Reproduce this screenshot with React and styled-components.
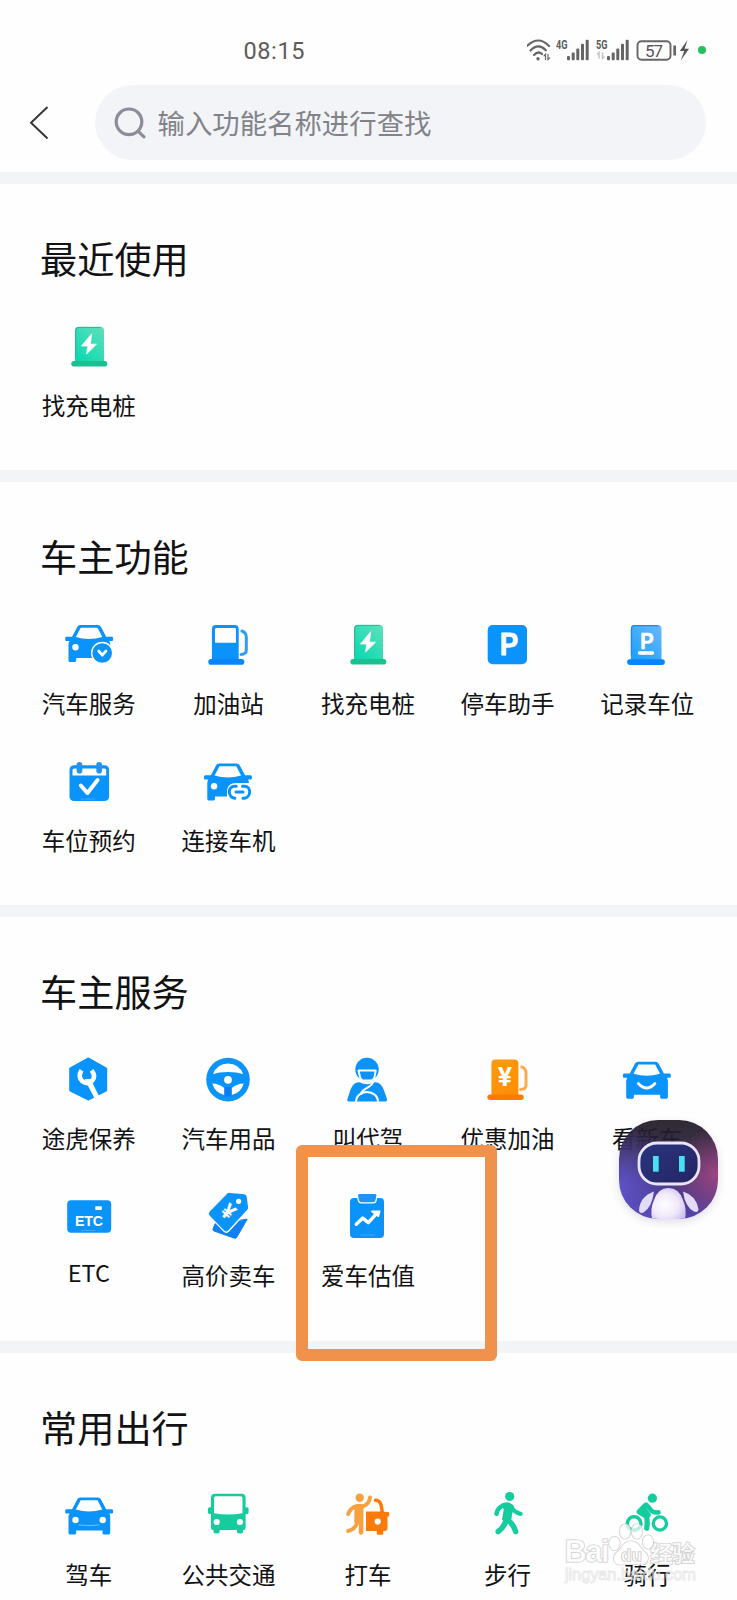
import styled, { createGlobalStyle } from 'styled-components';

const GlobalStyle = createGlobalStyle`
    * {
        box-sizing: border-box;
    }

    html, body {
        margin: 0;
        padding: 0;
        background-color: #fefefe;
        overflow: hidden;
    }

    body {
        font-family: "Noto Sans CJK SC", "Noto Sans", sans-serif;
        color: #121214;
    }

    svg {
        display: block;
        flex: none;
    }
`;

const Page = styled.div`
    position: relative;
    width: 737px;
    height: 1600px;
    overflow: hidden;
    background-color: #fefefe;
`;

export default function App() {
    return (
        <Page>
            <GlobalStyle />
            <StatusBar />
            <Header />
            {sections.map((section) => (
                <Section key={section.title} {...section} />
            ))}
            <Highlight />
            <Assistant />
            <Watermark />
        </Page>
    );
}

// Status bar

const StyledStatusBar = styled.div`
    display: flex;
    align-items: center;
    height: 85px;
    padding: 15px 31px 0 243.5px;

    .time {
        padding-top: 2px;
        font-family: Roboto, sans-serif;
        font-size: 23.5px;
        letter-spacing: 0.6px;
        color: #5c5c5c;
    }

    .indicators {
        display: flex;
        align-items: center;
        margin-left: auto;
    }
`;

const Dot = styled.span`
    width: 8px;
    height: 8px;
    margin-left: 9px;
    border-radius: 50%;
    background-color: #26bf5c;
`;

function Signal({ name, traffic }) {
    return (
        <svg width="40" height="24" viewBox="0 0 40 24">
            <text x="1" y="10.5" fontFamily="Roboto, sans-serif" fontWeight="700" fontSize="12" textLength="11.5" lengthAdjust="spacingAndGlyphs" fill="#5c5c5c">{name}</text>
            {traffic && <path d="M4 20.500v-6l-2 2M7.500 14.500v6l2-2" stroke="#c4c4c4" strokeWidth="1.500" fill="none" />}
            <g fill="#666">
                <rect x="12" y="18" width="3" height="4.200" rx="1" />
                <rect x="16.700" y="14.500" width="3" height="7.700" rx="1" />
                <rect x="21.300" y="10.500" width="3" height="11.700" rx="1" />
                <rect x="26" y="5.800" width="3" height="16.400" rx="1" />
                <rect x="30.700" y="1.800" width="3" height="20.400" rx="1" />
            </g>
        </svg>
    );
}

function StatusBar() {
    return (
        <StyledStatusBar>
            <span className="time">08:15</span>
            <div className="indicators">
                <svg width="28" height="24" viewBox="0 0 28 24" fill="none" stroke="#666" strokeWidth="2.200" strokeLinecap="round">
                    <path d="M0 8Q11.500 -3 22 8M3.500 12.500Q11.500 4.500 18.800 12.300M7 17Q11.300 12.500 15 16" />
                    <circle cx="11" cy="20.700" r="1.700" fill="#666" stroke="none" />
                    <path d="M18.500 21.500v-5.200l-1.500 1.500M21 16.300v5.200l1.700-1.700" strokeWidth="1.200" />
                </svg>
                <Signal name="4G" />
                <Signal name="5G" traffic />
                <svg width="54" height="24" viewBox="0 0 54 24">
                    <rect x="2.500" y="3.200" width="33" height="18.500" rx="4" fill="none" stroke="#666" strokeWidth="1.900" />
                    <text x="19" y="18.500" textAnchor="middle" fontFamily="Roboto, sans-serif" fontSize="17" textLength="18" fill="#555">57</text>
                    <rect x="38.300" y="7.500" width="2.700" height="10" fill="#666" />
                    <path d="M52.500 2L44.800 13h4.500L45.600 22.800 54 10.800h-4.400z" fill="#555" />
                </svg>
                <Dot />
            </div>
        </StyledStatusBar>
    );
}

// Header

const StyledHeader = styled.header`
    display: flex;
    align-items: center;
    justify-content: space-between;
    height: 87px;
    padding: 0 31.5px 12px 29px;
`;

const SearchBox = styled.div`
    display: flex;
    align-items: center;
    gap: 10.5px;
    width: 610.5px;
    height: 74.5px;
    padding-left: 19px;
    border-radius: 38px;
    background-color: #f3f4f8;
    font-size: 27.4px;
    line-height: 40px;
    color: #818389;

    span {
        padding-bottom: 1.5px;
    }
`;

function Header() {
    return (
        <StyledHeader>
            <svg width="22" height="38" viewBox="0 0 22 38" fill="none" stroke="#333" strokeWidth="1.9">
                <path d="M18.500 3L2 18.700 18.500 34.500" />
            </svg>
            <SearchBox>
                <svg width="33" height="34" viewBox="0 0 33 34" fill="none" stroke="#8b8d99" strokeWidth="3.200" strokeLinecap="round">
                    <circle cx="15" cy="15.800" r="12.800" />
                    <path d="M24.500 25.600L30 30.800" />
                </svg>
                <span>输入功能名称进行查找</span>
            </SearchBox>
        </StyledHeader>
    );
}

// Sections

const StyledSection = styled.section`
    height: ${(props) => props.$height}px;
    padding: 54px 20px 0 19px;
    border-top: 12px solid #f3f4f6;
    box-sizing: content-box;
    width: 698px;

    h2 {
        margin: 0 0 42px 21px;
        font-size: 37.2px;
        font-weight: 400;
        line-height: 41px;
    }
`;

const Grid = styled.div`
    display: grid;
    grid-template-columns: repeat(5, 1fr);
    row-gap: 36.4px;
`;

const Item = styled.div`
    display: flex;
    flex-direction: column;
    align-items: center;
    gap: ${(props) => (props.$latin ? 12.5 : 16)}px;
    height: 101px;
    font-size: 23.5px;
    line-height: 32px;
    white-space: nowrap;
`;

function Section({ title, height, items }) {
    return (
        <StyledSection $height={height}>
            <h2>{title}</h2>
            <Grid>
                {items.map(([name, Icon]) => (
                    <Item key={name} $latin={name === 'ETC'}>
                        <svg width="52" height="52" viewBox="0 0 52 52" fill="none" strokeLinecap="round" strokeLinejoin="round" overflow="visible">
                            <Icon />
                        </svg>
                        <span>{name}</span>
                    </Item>
                ))}
            </Grid>
        </StyledSection>
    );
}

// Icons, all on a 52px canvas

const BLUE = '#0a93fb';
const GREEN = '#14cc9e';

function CarBody() {
    return (
        <path
            fill={BLUE}
            fillRule="evenodd"
            d="M17.500 6h17.200c1.500 0 2.600.7 3.300 2l5.200 9.700h5.400c1 0 1.500.7 1.500 1.700v1c0 1-.6 1.600-1.600 1.600h-2.300q1 1.500 1 3.500v15.500c0 1.500-.6 2-2 2h-3.700c-1.500 0-2-.6-2-2V39H13.200v2c0 1.400-.6 2-2 2H7.500c-1.400 0-2-.6-2-2V25.500q0-2 1-3.500H3.800c-1 0-1.600-.6-1.600-1.600v-1c0-1 .6-1.700 1.600-1.700h5.300L14.200 8c.7-1.300 1.800-2 3.300-2zM17.700 8.700L12.800 18Q26 22 39.300 18L34.500 8.700z"
        />
    );
}

function CarService() {
    return (
        <>
            <CarBody />
            <circle cx="12.500" cy="28.300" r="3.200" fill="#fff" />
            <path d="M32 44.500h18V30H37z" fill="#fefefe" />
            <circle cx="39.200" cy="34" r="11.200" fill="#fefefe" />
            <circle cx="39.200" cy="34" r="9.800" fill={BLUE} />
            <path d="M35.700 32l3.600 4.200 3.700-4.200" stroke="#fff" strokeWidth="2.700" />
        </>
    );
}

function CarLink() {
    return (
        <>
            <g transform="translate(-.2 1.600)">
                <CarBody />
            </g>
            <circle cx="12.100" cy="30.300" r="3.200" fill="#fff" />
            <path d="M25 46V36c0-6 3.500-9 9-9h15.500V46z" fill="#fefefe" />
            <g stroke={BLUE} strokeWidth="3">
                <path d="M34.200 30.200h-1.400c-3.500 0-5.500 2.600-5.500 5.600s2 5.900 5.500 6.500M40.500 30.200h2c3.300 0 5.200 2.600 5.200 5.600s-2 5.900-5.200 6.500h-1.500M34 36.100h7" />
            </g>
        </>
    );
}

function CarSmile() {
    return (
        <>
            <g transform="translate(-.3 1.800)">
                <CarBody />
            </g>
            <path d="M17.300 29.500q8.400 9 16.600 0" stroke="#fff" strokeWidth="2.800" />
        </>
    );
}

function CarDrive() {
    return (
        <>
            <g transform="translate(0 1.600)">
                <CarBody />
            </g>
            <circle cx="12.500" cy="30" r="3.200" fill="#fff" />
            <circle cx="39.700" cy="30" r="3.200" fill="#fff" />
            <path d="M16 35q10 1.200 20 0" stroke="#7cc8ff" strokeWidth=".9" />
        </>
    );
}

function FuelPump() {
    return (
        <>
            <path d="M14 6h18.500c3 0 4.200 1.500 4.200 4v32H9.900V10c0-2.500 1.300-4 4.100-4z" fill={BLUE} />
            <path d="M14.500 9H32.500c1 0 1.500.5 1.500 1.500v13.200H13V10.500c0-1 .5-1.500 1.500-1.500z" fill="#fefefe" />
            <path d="M40 12q4.300 1.700 4.300 6v13q0 4.300-5.300 4.500" stroke="#2b9ff5" strokeWidth="3" />
            <rect x="6.300" y="40" width="36" height="5.700" rx="2.800" fill="#0b84fb" />
        </>
    );
}

function ChargePile() {
    return (
        <>
            <linearGradient id="pile" x1="1" y1="0" x2="0.300" y2="1">
                <stop offset="0" stopColor="#5fe0bb" />
                <stop offset="1" stopColor="#0cd9b0" />
            </linearGradient>
            <rect x="12" y="5.800" width="29" height="38" rx="4" fill="url(#pile)" />
            <path d="M12.700 36V10q0-3.500 3.300-3.500h21" stroke="#31b795" strokeWidth="1.200" />
            <rect x="8.300" y="40" width="36" height="5.600" rx="2.800" fill="#1cbf8f" />
            <path d="M28.500 13L18.500 25h6.300l-1.200 8L33.500 23.200h-5.800z" fill="#fff" stroke="#fff" strokeWidth=".8" />
        </>
    );
}

function Parking() {
    return (
        <>
            <rect x="5.700" y="6" width="39.300" height="39.300" rx="5" fill={BLUE} />
            <text x="27" y="36" textAnchor="middle" fontFamily="Inter, sans-serif" fontWeight="600" fontSize="29.500" fill="#fff" stroke="#fff" strokeWidth=".8">P</text>
        </>
    );
}

function ParkingRecord() {
    return (
        <>
            <linearGradient id="record" x1="1" y1="0" x2="0.300" y2="1">
                <stop offset="0" stopColor="#6cb9fa" />
                <stop offset="1" stopColor="#1ea0fc" />
            </linearGradient>
            <rect x="9.800" y="6" width="30.700" height="38" rx="4" fill="url(#record)" />
            <path d="M10.500 36V10q0-3.400 3.300-3.400H37" stroke="#2685df" strokeWidth="1.200" />
            <rect x="6.100" y="40.200" width="37.800" height="5.700" rx="2.800" fill="#0b84fb" />
            <text x="26" y="29.500" textAnchor="middle" fontFamily="Inter, sans-serif" fontWeight="600" fontSize="21.500" fill="#fff" stroke="#fff" strokeWidth=".6">P</text>
            <path d="M18.500 34h13" stroke="#fff" strokeWidth="3.400" />
        </>
    );
}

function Calendar() {
    return (
        <>
            <rect x="6.500" y="9.300" width="39.600" height="35.800" rx="4.500" fill={BLUE} />
            <path d="M9.500 14.200q0-1.700 1.700-1.700h30.300q1.700 0 1.700 1.700v5.200H9.500z" fill="#fefefe" />
            <rect x="13.600" y="6" width="5.700" height="11.500" rx="2.800" fill="#2692ee" />
            <rect x="33.300" y="6" width="5.700" height="11.500" rx="2.800" fill="#2692ee" />
            <path d="M17.800 29.500l6.600 7.500 10.200-13" stroke="#fff" strokeWidth="3.900" />
            <path d="M18 43h14" stroke="#6ac0ff" strokeWidth=".5" />
        </>
    );
}

function Maintenance() {
    return (
        <>
            <path d="M25.300 5L42.700 14.800v21.400L25.300 45 7.700 36.200V14.800z" fill={BLUE} stroke={BLUE} strokeWidth="3" />
            <path d="M18.500 16.300q-4 6.500.7 10.800 5.200 4 10-.3 4-4.500-.6-10.500" stroke="#fff" strokeWidth="4.600" strokeLinecap="butt" />
            <path d="M16 14.500h4.700v7l3 2.500 3-2.500.5-7H32V28q-8 6-14 1z" fill="none" />
            <path d="M22 25h5.500l8.500 17-4.300 2.400L24.500 31z" fill="#fff" />
        </>
    );
}

function SteeringWheel() {
    return (
        <>
            <circle cx="26" cy="25.600" r="21.800" fill={BLUE} />
            <path d="M11 20.200Q15 9.500 26 9.500T41.200 20.200q-6-2.300-15.200-2.300T11 20.200z" fill="#fefefe" />
            <path d="M10.300 29.600q6.500.2 11.900 4.400V41Q13 39 10.300 29.600zM41.700 29.600q-6.500.2-11.900 4.400V41Q39 39 41.700 29.600z" fill="#fefefe" />
            <path d="M22.700 33h6.600v9.500h-6.600z" fill="#0b7df0" />
            <circle cx="26" cy="25.800" r="3.900" fill="#fff" />
        </>
    );
}

function Driver() {
    return (
        <>
            <path d="M17.500 28.200q7.700 4 15 0c6.500 0 8.500 5 9.800 9l2.700 8q.4 2.300-2 2.300H7.300q-2.400 0-2-2.300l2.700-8c1.300-4 3.500-9 9.500-9z" fill={BLUE} />
            <circle cx="25" cy="15.500" r="11.700" fill={BLUE} />
            <path d="M16.500 16.600h17.200l-1.200 6.400q-1 3.600-4.500 3.600h-5.500q-3.500 0-4.500-3.600z" fill={BLUE} stroke="#fff" strokeWidth="2" />
            <path d="M31.500 26.500C31 34 20.500 33.500 18.800 40" stroke="#fff" strokeWidth="2" />
            <path d="M14 47.500a11 9.500 0 0 1 22 0" stroke="#fff" strokeWidth="2" strokeLinecap="butt" />
        </>
    );
}

function DiscountFuel() {
    return (
        <>
            <linearGradient id="discount" x1="0" y1="0" x2="0.500" y2="1">
                <stop offset="0" stopColor="#fb9a12" />
                <stop offset="1" stopColor="#ff8f04" />
            </linearGradient>
            <rect x="9.400" y="5.500" width="27" height="38" rx="4" fill="url(#discount)" />
            <path d="M39.800 12.800q4.200 2 4.200 6v12q0 4.700-5.500 4.700" stroke="#fbac4e" strokeWidth="3" />
            <rect x="5.400" y="40.400" width="36.300" height="5.500" rx="2.700" fill="#fa7b04" />
            <text x="22.800" y="32.300" textAnchor="middle" fontFamily="Inter, sans-serif" fontWeight="700" fontSize="26" fill="#fff">¥</text>
        </>
    );
}

function NewCard() {
    return (
        <>
            <rect x="4.200" y="9.300" width="44" height="32.500" rx="4" fill={BLUE} />
            <rect x="32.200" y="15.300" width="6.700" height="3.700" rx=".8" fill="#fff" />
            <text x="12" y="35" fontFamily="Liberation Sans, sans-serif" fontWeight="700" fontSize="14.200" textLength="28" fill="#fff">ETC</text>
            <path d="M18 39.500h14" stroke="#6ac0ff" strokeWidth=".5" />
        </>
    );
}

function PriceTag() {
    return (
        <>
            <path d="M13 33l-2 5q-.5 1.500 1 2l20.500 7.200q1.700.5 2.300-1L45 28.500z" fill="#1080f0" stroke="#1080f0" strokeWidth="1" />
            <path d="M28 2.800l14 1.400q1.600.2 1.800 1.700l1.400 10.500q.1 1-.6 1.800L25.500 39q-1.200 1.300-2.400 0L8.400 24q-1.200-1.200-.2-2.500L25.300 3.800q1-1.200 2.700-1z" fill={BLUE} stroke="#fefefe" strokeWidth="4.600" paintOrder="stroke" />
            <path d="M28 2.800l14 1.400q1.600.2 1.800 1.700l1.400 10.500q.1 1-.6 1.800L25.500 39q-1.200 1.300-2.400 0L8.400 24q-1.200-1.200-.2-2.500L25.300 3.800q1-1.200 2.700-1z" fill={BLUE} stroke={BLUE} strokeWidth="1.800" />
            <circle cx="36.600" cy="10.300" r="2.600" fill="#fff" />
            <text transform="translate(26.200 20.600) rotate(42)" y="7.600" textAnchor="middle" fontFamily="Inter, sans-serif" fontWeight="700" fontSize="21" fill="#fff">¥</text>
        </>
    );
}

function Valuation() {
    return (
        <>
            <rect x="8" y="7" width="34" height="40" rx="4" fill={BLUE} />
            <path d="M17.600 3h15.300q1.800 0 1.500 1.800l-.9 4.400q-.4 2-2.400 2H19.400q-2 0-2.400-2l-.9-4.400Q15.800 3 17.600 3z" fill="#2492f0" stroke="#fff" strokeWidth="2.600" paintOrder="stroke" />
            <path d="M14.300 33.300l6.500-6.200 5.500 4.500 8.500-9.300" stroke="#fff" strokeWidth="3.400" />
            <path d="M29.800 20.300h8l-1.400 5z" fill="#fff" stroke="#fff" strokeWidth="1.500" />
            <path d="M19 44h13" stroke="#6ac0ff" strokeWidth=".5" />
        </>
    );
}

function Bus() {
    return (
        <>
            <path
                fill={GREEN}
                fillRule="evenodd"
                d="M13 3.700h26.500c2.800 0 4.100 1.400 4.100 4v9.600H45q1.600 0 1.600 1.600v3.500Q46.600 24 45 24h-1.400v14q0 2-2 2h-.5v1.500q0 2-2 2H37q-2 0-2-2V40H17.700v1.500q0 2-2 2h-2.200q-2 0-2-2V40H11q-2 0-2-2V24H7.600Q6 24 6 22.400v-3.500q0-1.600 1.600-1.600H9V7.700c0-2.600 1.300-4 4-4zM14 6.300q-2 0-2 2v15q14.300 2.600 28.500 0v-15q0-2-2-2z"
            />
            <circle cx="14.700" cy="32" r="3.100" fill="#fff" />
            <circle cx="37.900" cy="32" r="3.100" fill="#fff" />
        </>
    );
}

function Taxi() {
    return (
        <>
            <g fill="#f7a040">
                <circle cx="17.700" cy="7.800" r="4.200" />
                <path d="M12.500 15q4-1.500 8.900-.5V42q0 2.800-2.300 2.800T16.800 42V32l-4.500 1z" />
            </g>
            <path d="M28 7.500q-.8 6.500-6.600 8.700h-6.400q-6.500 1-8.800 8M15.500 31q-1.500 8-9.300 10" stroke="#f7a040" strokeWidth="3.900" />
            <path d="M24 21.500h14.500L46 22q1.300 0 1.300 1.500v1.800q0 1.500-1.800 1.500V38q0 3-2.700 3h-1.500v2.300q0 1.500-1.500 1.500h-3.500q-1.500 0-1.500-1.500V41H24z" fill="#fa7a0a" />
            <path d="M33.500 10.200c4.500 0 6 3.500 6.700 12" stroke="#fa7a0a" strokeWidth="3.500" />
            <circle cx="35.700" cy="31.600" r="3.100" fill="#fff" />
        </>
    );
}

function Walking() {
    return (
        <>
            <circle cx="27.700" cy="6.500" r="4.600" fill={GREEN} />
            <path d="M19.500 14q6-3.500 9.700 0c1.700 1.600 1.700 5 1.300 8.500l-1.500 8.600-9-1.300 1.700-10z" fill={GREEN} />
            <g stroke={GREEN} strokeWidth="4.500">
                <path d="M22 15q-6.500 2.300-7.500 8.800M29.500 16.500q1.500 5.300 8.900 7.300" />
                <path d="M24 28q.5 7-7.800 13.500M25.500 29.500q6.500 5.500 8.200 12.200" strokeWidth="5.400" />
            </g>
        </>
    );
}

function Cycling() {
    return (
        <>
            <circle cx="31.400" cy="8.200" r="4.600" fill={GREEN} />
            <g stroke={GREEN} strokeWidth="3.400">
                <circle cx="13.100" cy="33.500" r="6.800" />
                <circle cx="38.900" cy="33.500" r="6.600" />
                <path d="M24.500 15.300l-6.300 6.500 7.300 4.500q1.300 5.500.2 12" strokeWidth="5.200" />
                <path d="M25.500 15l5.500 6.200q2.500 1.500 6.500 1.200" strokeWidth="4.600" />
                <path d="M22.500 19l4.500 6" strokeWidth="5.500" />
            </g>
        </>
    );
}

const sections = [
    {
        title: '最近使用',
        height: 232,
        items: [['找充电桩', ChargePile]],
    },
    {
        title: '车主功能',
        height: 369,
        items: [
            ['汽车服务', CarService],
            ['加油站', FuelPump],
            ['找充电桩', ChargePile],
            ['停车助手', Parking],
            ['记录车位', ParkingRecord],
            ['车位预约', Calendar],
            ['连接车机', CarLink],
        ],
    },
    {
        title: '车主服务',
        height: 370,
        items: [
            ['途虎保养', Maintenance],
            ['汽车用品', SteeringWheel],
            ['叫代驾', Driver],
            ['优惠加油', DiscountFuel],
            ['看新车', CarSmile],
            ['ETC', NewCard],
            ['高价卖车', PriceTag],
            ['爱车估值', Valuation],
        ],
    },
    {
        title: '常用出行',
        height: 232,
        items: [
            ['驾车', CarDrive],
            ['公共交通', Bus],
            ['打车', Taxi],
            ['步行', Walking],
            ['骑行', Cycling],
        ],
    },
];

// Layers over the page

const Highlight = styled.div`
    position: absolute;
    left: 296px;
    top: 1145px;
    width: 201px;
    height: 216px;
    border: 12px solid #f0924b;
    border-radius: 6px;
`;

const StyledAssistant = styled.div`
    position: absolute;
    left: 619px;
    top: 1120px;
    width: 99px;
    height: 99px;
    border-radius: 39px;
    overflow: hidden;
    background:
        radial-gradient(circle at 0% 68%, rgba(96, 84, 205, 0.95), rgba(70, 60, 150, 0) 52%),
        radial-gradient(circle at 98% 55%, rgba(160, 70, 130, 0.95), rgba(120, 60, 120, 0) 42%),
        linear-gradient(180deg, rgba(32, 26, 37, 0.93) 0%, rgba(42, 31, 62, 0.93) 32%, #4a3a8a 75%, #5546b0 100%);
    box-shadow: 0 3px 9px rgba(60, 50, 110, 0.16);
`;

function Assistant() {
    return (
        <StyledAssistant>
            <svg width="99" height="99" viewBox="0 0 99 99">
                <radialGradient id="belly" cx="0.400" cy="0.550" r="0.650">
                    <stop offset="0" stopColor="#fff" />
                    <stop offset="0.600" stopColor="#f1e8fb" />
                    <stop offset="1" stopColor="#cdc0ee" />
                </radialGradient>
                <linearGradient id="face" x1="0" y1="0" x2="1" y2="1">
                    <stop offset="0" stopColor="#28367f" />
                    <stop offset="1" stopColor="#262363" />
                </linearGradient>
                <rect x="20" y="23" width="60" height="41" rx="18" fill="url(#face)" stroke="#e9e4f8" strokeWidth="2.800" />
                <rect x="34" y="36" width="5.700" height="15.700" fill="#49dff0" />
                <rect x="60" y="36" width="5.700" height="15.700" fill="#49dff0" />
                <path d="M33 99q-2-10 2-19 4-12 14.500-12T64 80q4 9 2 19z" fill="url(#belly)" />
                <path d="M35 71.500q-14 5-15 18.500.5 4 4.500 2.500Q33 87 35 71.500z" fill="#e3dcf6" />
                <path d="M64 71.500q13 4 15.500 17.500-.3 4-4.500 2.500Q66 87 64 71.500z" fill="#e3dcf6" />
            </svg>
        </StyledAssistant>
    );
}

const StyledWatermark = styled.svg`
    position: absolute;
    left: 560px;
    top: 1514px;
`;

function Watermark() {
    return (
        <StyledWatermark width="145" height="76" viewBox="0 0 145 76" fill="#fff" fillOpacity=".7" stroke="#cbcbcb" strokeWidth="1.200" paintOrder="stroke">
            <text x="4.500" y="47.500" fontFamily="Liberation Sans, sans-serif" fontWeight="700" fontSize="31" textLength="45">Bai</text>
            <ellipse cx="54.500" cy="29.500" rx="5.500" ry="7" />
            <ellipse cx="65" cy="17.500" rx="5.500" ry="7.500" />
            <ellipse cx="77" cy="17.500" rx="5.500" ry="7.500" />
            <ellipse cx="88" cy="28" rx="5.500" ry="7" />
            <path d="M71 27c8 0 9 7 14 11s4 13-4 13q-10-2-20 0c-9 0-9-9-4-13s6-11 14-11z" />
            <text x="61" y="47" fontFamily="Liberation Sans, sans-serif" fontWeight="700" fontSize="17" stroke="#c3c3c3">du</text>
            <text x="90" y="48" fontFamily="Noto Sans CJK SC, sans-serif" fontWeight="700" fontSize="23" textLength="45">经验</text>
            <text x="5" y="66" fontFamily="Liberation Sans, sans-serif" fontSize="16.500" textLength="131" fillOpacity=".25" stroke="#d8d8d8" strokeOpacity=".7" strokeWidth=".9">jingyan.baidu.com</text>
        </StyledWatermark>
    );
}
